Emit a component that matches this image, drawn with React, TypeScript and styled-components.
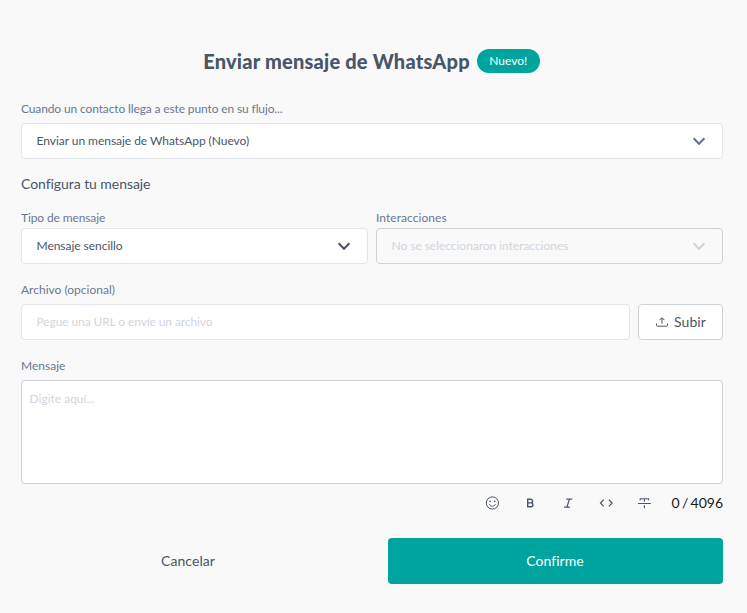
import React from 'react';
import styled, { createGlobalStyle } from 'styled-components';

const GlobalStyle = createGlobalStyle`
  * { box-sizing: border-box; }
  body {
    margin: 0;
    background: #f9f9f9;
    font-family: Lato, "Open Sans", sans-serif;
    color: #4a5568;
  }
  button, input, textarea { font-family: inherit; }
`;

const Dialog = styled.main`
  display: flex;
  flex-direction: column;
  width: 747px;
  height: 613px;
  padding: 46px 24px 0 21px;
  background: #f9f9f9;
  overflow: hidden;
`;

const Header = styled.header`
  display: flex;
  align-items: center;
  justify-content: center;
  gap: 7px;
  height: 30px;
  padding-right: 1px;
`;

const Title = styled.h1`
  margin: 0;
  font-size: 20px;
  line-height: 30px;
  font-weight: 900;
  letter-spacing: 0.2px;
  white-space: nowrap;
`;

const Badge = styled.span`
  width: 63px;
  height: 24px;
  border-radius: 12px;
  background: #00a49f;
  color: #fff;
  font-size: 12px;
  line-height: 24px;
  text-align: center;
`;

const Field = styled.div<{ $gap?: number }>`
  display: flex;
  flex-direction: column;
  flex: 1;
  gap: ${p => p.$gap ?? 5}px;
`;

const Section = styled.section<{ $top: number }>`
  display: flex;
  flex: none;
  gap: 8px;
  margin-top: ${p => p.$top}px;
`;

const Label = styled.label<{ $tracking?: number }>`
  color: #6b788e;
  font-size: 12px;
  line-height: 18px;
  height: 18px;
  letter-spacing: ${p => p.$tracking ?? 0}px;
`;

const Subtitle = styled.h2`
  margin: 15px 0 0;
  font-size: 14px;
  line-height: 20px;
  font-weight: 400;
  letter-spacing: -0.06px;
`;

const Select = styled.button<{ $disabled?: boolean }>`
  display: flex;
  align-items: center;
  justify-content: space-between;
  width: 100%;
  height: 36px;
  padding: 0 16px 0 14.5px;
  border: 1px solid ${p => (p.$disabled ? '#cfd1d9' : '#e2e5ec')};
  border-radius: 4px;
  background: ${p => (p.$disabled ? '#f9f9f9' : '#fff')};
  color: ${p => (p.$disabled ? '#d2d5db' : '#4a5568')};
  font-size: 12px;
  letter-spacing: -0.04px;
  text-align: left;
`;

const SelectText = styled.span`
  padding-bottom: 2px;
`;

const FileRow = styled.div`
  display: flex;
  gap: 8px;
`;

const FileInput = styled.input`
  flex: 1;
  min-width: 0;
  height: 36px;
  padding: 0 15px 2px 14.5px;
  border: 1px solid #e2e5ec;
  border-radius: 4px;
  background: #fff;
  font-size: 12px;
  letter-spacing: -0.1px;
  &::placeholder { color: #d2d5db; }
`;

const UploadButton = styled.button`
  display: flex;
  align-items: center;
  justify-content: center;
  gap: 6px;
  width: 85px;
  height: 36px;
  padding: 0 0 0 1px;
  border: 1px solid #cfd1d9;
  border-radius: 4px;
  background: #fff;
  color: #4a5568;
  font-size: 14px;
`;

const UploadText = styled.span`
  padding-bottom: 2px;
  letter-spacing: 0.1px;
`;

const MessageInput = styled.textarea`
  display: block;
  width: 100%;
  height: 104px;
  padding: 9px 7.5px;
  border: 1px solid #cfd1d9;
  border-radius: 4px;
  background: #fff;
  font-size: 12px;
  line-height: 18px;
  resize: none;
  &::placeholder { color: #d2d5db; }
`;

const Toolbar = styled.div`
  display: flex;
  align-items: center;
  justify-content: flex-end;
  height: 38px;
`;

const ToolButton = styled.button`
  display: flex;
  align-items: center;
  justify-content: center;
  width: 38px;
  height: 38px;
  padding: 0;
  border: 0;
  background: transparent;
  color: #4a5568;
`;

const Counter = styled.span`
  width: 60px;
  padding-bottom: 2px;
  color: #1a1a1a;
  font-size: 14px;
  word-spacing: -1.3px;
  text-align: right;
  white-space: nowrap;
`;

const Footer = styled.footer`
  display: grid;
  grid-template-columns: 335px 335px;
  justify-content: space-between;
  margin-top: 16px;
`;

const ActionButton = styled.button<{ $primary?: boolean }>`
  height: 46px;
  padding: 0 1px 2px 0;
  border: 0;
  border-radius: 4px;
  background: ${p => (p.$primary ? '#00a49f' : 'transparent')};
  color: ${p => (p.$primary ? '#fff' : '#4a5568')};
  font-size: 14px;
  letter-spacing: 0.05px;
`;

const Icon = styled.svg`
  display: block;
  flex: none;
  fill: none;
  stroke: currentColor;
`;

const Chevron = ({ color }: { color: string }) => (
  <Icon width="14" height="10" viewBox="0 0 14 10" color={color} strokeWidth="2">
    <path d="M1.6 2.2 7 7.8 12.4 2.2" />
  </Icon>
);

const UploadIcon = () => (
  <Icon width="12" height="12" viewBox="0 0 12 12" strokeWidth="1">
    <path d="M.5 7.5v1.7q0 1 1 1h9q1 0 1-1V7.5M6 7.7V2M3.5 4.2 6 1.7l2.5 2.5" />
  </Icon>
);

const SmileIcon = () => (
  <Icon width="14" height="14" viewBox="0 0 14 14">
    <circle cx="7.4" cy="7" r="6.1" />
    <path d="M4.5 8.2c.4 1.4 1.5 2 2.9 2s2.5-.6 2.9-2" />
    <circle cx="5.1" cy="5.4" r=".8" fill="currentColor" stroke="none" />
    <circle cx="9.7" cy="5.4" r=".8" fill="currentColor" stroke="none" />
  </Icon>
);

const BoldIcon = () => (
  <Icon width="14" height="14" viewBox="0 0 14 14" strokeWidth="1.4">
    <path d="M4.7 3.2h3a1.85 1.85 0 0 1 0 3.7h-3zM4.7 6.9h3.3a1.95 1.95 0 0 1 0 3.9H4.7z" />
  </Icon>
);

const ItalicIcon = () => (
  <Icon width="14" height="14" viewBox="0 0 14 14" strokeWidth="1.2">
    <path d="M5.3 3.1h6M3.1 11.1h5.8M8.4 3.1 5.9 11.1" />
  </Icon>
);

const CodeIcon = () => (
  <Icon width="14" height="14" viewBox="0 0 14 14" strokeWidth="1.2">
    <path d="M4.7 3.7 1.5 7l3.2 3.3M9.9 3.7 13.1 7l-3.2 3.3" />
  </Icon>
);

const StrikeIcon = () => (
  <Icon width="14" height="14" viewBox="0 0 14 14" strokeWidth="1.1">
    <path d="M1 7.5h12.8M3.2 4.2V2.7h8.4v1.5M7.4 2.7v3.1M7.4 9.2v3" />
  </Icon>
);

export default function App() {
  return (
    <>
      <GlobalStyle />
      <Dialog>
        <Header>
          <Title>Enviar mensaje de WhatsApp</Title>
          <Badge>Nuevo!</Badge>
        </Header>
        <Section $top={24}>
          <Field>
            <Label $tracking={-0.13}>Cuando un contacto llega a este punto en su flujo...</Label>
            <Select>
              <SelectText>Enviar un mensaje de WhatsApp (Nuevo)</SelectText>
              <Chevron color="#68728a" />
            </Select>
          </Field>
        </Section>
        <Subtitle>Configura tu mensaje</Subtitle>
        <Section $top={15}>
          <Field $gap={1}>
            <Label $tracking={-0.12}>Tipo de mensaje</Label>
            <Select>
              <SelectText>Mensaje sencillo</SelectText>
              <Chevron color="#4a5568" />
            </Select>
          </Field>
          <Field $gap={1}>
            <Label $tracking={0.05}>Interacciones</Label>
            <Select $disabled disabled>
              <SelectText>No se seleccionaron interacciones</SelectText>
              <Chevron color="#d2d5db" />
            </Select>
          </Field>
        </Section>
        <Section $top={17}>
          <Field>
            <Label>Archivo (opcional)</Label>
            <FileRow>
              <FileInput placeholder="Pegue una URL o envíe un archivo" />
              <UploadButton>
                <UploadIcon />
                <UploadText>Subir</UploadText>
              </UploadButton>
            </FileRow>
          </Field>
        </Section>
        <Section $top={17}>
          <Field>
            <Label>Mensaje</Label>
            <MessageInput placeholder="Digite aquí..." />
          </Field>
        </Section>
        <Toolbar>
          <ToolButton aria-label="Emoji"><SmileIcon /></ToolButton>
          <ToolButton aria-label="Negrita"><BoldIcon /></ToolButton>
          <ToolButton aria-label="Cursiva"><ItalicIcon /></ToolButton>
          <ToolButton aria-label="Código"><CodeIcon /></ToolButton>
          <ToolButton aria-label="Tachado"><StrikeIcon /></ToolButton>
          <Counter>0 / 4096</Counter>
        </Toolbar>
        <Footer>
          <ActionButton>Cancelar</ActionButton>
          <ActionButton $primary>Confirme</ActionButton>
        </Footer>
      </Dialog>
    </>
  );
}
